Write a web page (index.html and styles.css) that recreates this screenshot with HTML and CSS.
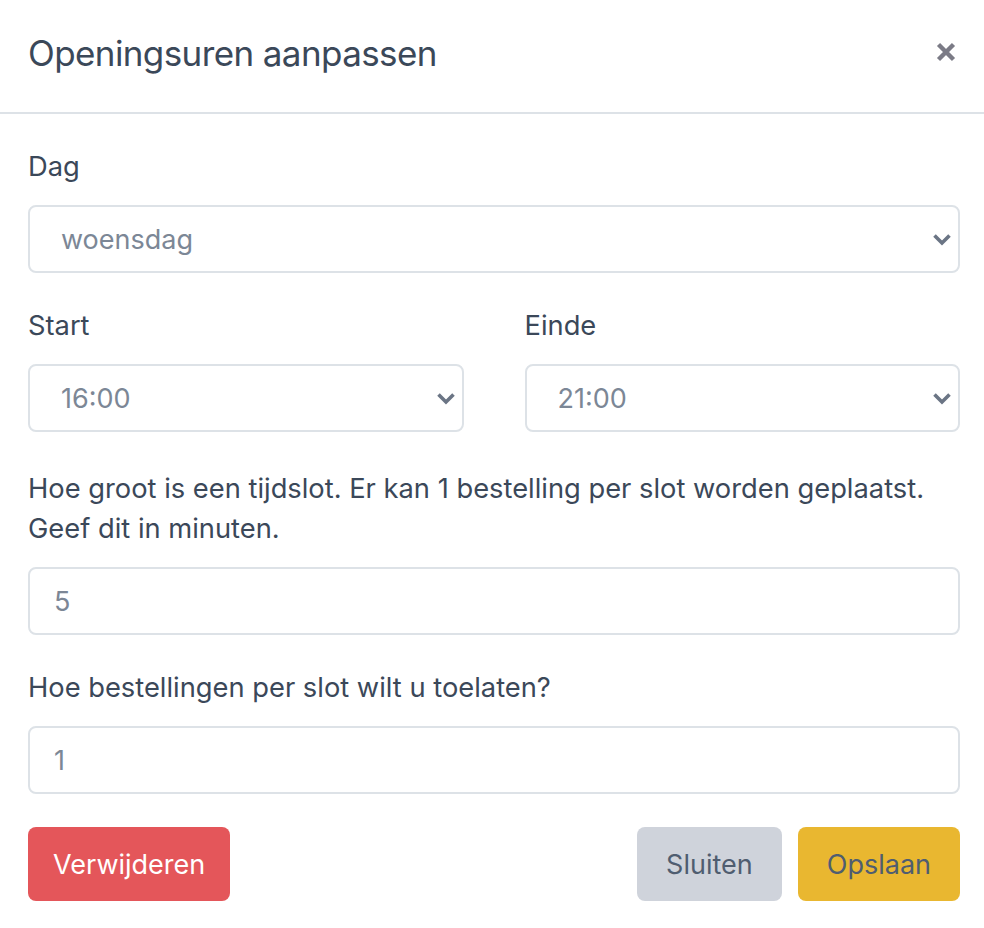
FILE: index.html
```html
<!DOCTYPE html>
<html lang="nl">
<head>
<meta charset="utf-8">
<title>Openingsuren aanpassen</title>
<link rel="stylesheet" href="styles.css">
</head>
<body>
<div class="modal">
  <header class="modal-header">
    <h1 class="modal-title">Openingsuren aanpassen</h1>
    <button class="close" type="button" aria-label="Sluiten">
      <svg width="22" height="22" viewBox="0 0 22 22"><path d="M3.5 3.5 L18.5 18.5 M18.5 3.5 L3.5 18.5" stroke="#7b7b86" stroke-width="4.4" stroke-linecap="butt" fill="none"/></svg>
    </button>
  </header>
  <div class="modal-body">
    <div class="field">
      <label class="label">Dag</label>
      <div class="select-wrap">
        <div class="control select">woensdag</div>
        <svg class="chevron" width="20" height="13" viewBox="0 0 20 13"><path d="M2.5 2.5 L10 10 L17.5 2.5" stroke="#6b7585" stroke-width="3.6" fill="none"/></svg>
      </div>
    </div>
    <div class="field row">
      <div class="col">
        <label class="label">Start</label>
        <div class="select-wrap">
          <div class="control select">16:00</div>
          <svg class="chevron" width="20" height="13" viewBox="0 0 20 13"><path d="M2.5 2.5 L10 10 L17.5 2.5" stroke="#6b7585" stroke-width="3.6" fill="none"/></svg>
        </div>
      </div>
      <div class="col">
        <label class="label">Einde</label>
        <div class="select-wrap">
          <div class="control select">21:00</div>
          <svg class="chevron" width="20" height="13" viewBox="0 0 20 13"><path d="M2.5 2.5 L10 10 L17.5 2.5" stroke="#6b7585" stroke-width="3.6" fill="none"/></svg>
        </div>
      </div>
    </div>
    <div class="field field-text">
      <label class="label">Hoe groot is een tijdslot. Er kan 1 bestelling per slot worden geplaatst. Geef dit in minuten.</label>
      <div class="control input">5</div>
    </div>
    <div class="field">
      <label class="label">Hoe bestellingen per slot wilt u toelaten?</label>
      <div class="control input">1</div>
    </div>
    <div class="actions">
      <button class="btn btn-danger" type="button">Verwijderen</button>
      <div class="actions-right">
        <button class="btn btn-grey" type="button">Sluiten</button>
        <button class="btn btn-yellow" type="button">Opslaan</button>
      </div>
    </div>
  </div>
</div>
</body>
</html>
```

FILE: styles.css
```css
* { box-sizing: border-box; }
html, body { margin: 0; padding: 0; background: #ffffff; }
body {
  font-family: Inter, "Noto Sans", "Liberation Sans", sans-serif;
  color: #3b4859;
}
.modal { width: 984px; }
.modal-header {
  height: 114px;
  display: flex;
  align-items: center;
  justify-content: space-between;
  padding: 0 28px 6px 28px;
  border-bottom: 2px solid #dde2e7;
}
.modal-title {
  margin: 0;
  font-size: 35px;
  font-weight: 400;
  letter-spacing: -0.6px;
  line-height: 42px;
  color: #3b4859;
}
.close {
  border: 0;
  background: transparent;
  padding: 0;
  margin: 0 -2px 2px 0;
  width: 24px;
  height: 24px;
  display: flex;
  align-items: center;
  justify-content: center;
}
.modal-body { padding: 33px 24px 0 28px; }
.field { margin-bottom: 33px; }
.field-text { padding-top: 4px; }
.label {
  display: block;
  font-size: 27.3px;
  line-height: 40px;
  margin-bottom: 18px;
  color: #3b4859;
}
.row {
  display: grid;
  grid-template-columns: 1fr 1fr;
  column-gap: 61px;
}
.select-wrap { position: relative; }
.control {
  height: 68px;
  border: 2px solid #dde2e7;
  border-radius: 8px;
  display: flex;
  align-items: center;
  font-size: 27px;
  color: #7c8796;
  background: #fff;
}
.select { padding-left: 31px; }
.input { padding-left: 24px; }
.chevron {
  position: absolute;
  right: 8px;
  top: 28px;
}
.actions {
  display: flex;
  justify-content: space-between;
  margin-top: 1px;
}
.actions-right { display: flex; gap: 16px; }
.btn {
  height: 74px;
  border: 0;
  border-radius: 8px;
  padding: 0 29px;
  font-family: inherit;
  font-size: 27px;
}
.btn-danger { background: #e4565a; color: #fff; padding: 0 25px; }
.btn-grey { background: #cfd3db; color: #4f5d70; }
.btn-yellow { background: #e9b730; color: #4f5d70; }
```
